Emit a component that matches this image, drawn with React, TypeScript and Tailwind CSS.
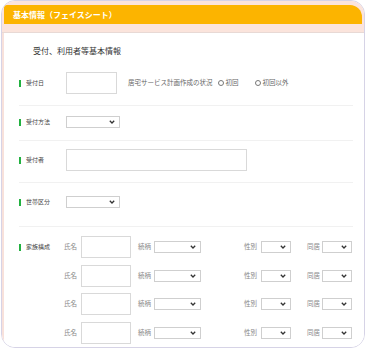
import React from "react";

const font = { fontFamily: '"Noto Sans CJK JP", "Noto Sans", sans-serif' };

const Chevron = () => (
  <svg width="6" height="4" viewBox="0 0 6 4" className="shrink-0">
    <path d="M0.8 0.8 L3 3 L5.2 0.8" fill="none" stroke="#333" strokeWidth="1.3" />
  </svg>
);

const Select = ({ w }: { w: string }) => (
  <div className={`${w} h-[12px] border border-[#cfcfcf] bg-white flex items-center justify-end pr-[4px]`}>
    <Chevron />
  </div>
);

const Label = ({ text }: { text: string }) => (
  <div className="w-[47px] shrink-0 flex items-center gap-[5px]">
    <span className="w-[2px] h-[7px] bg-[#22b140]" />
    <span className="text-[6px] leading-[8px] text-[#444]">{text}</span>
  </div>
);

const Radio = ({ text }: { text: string }) => (
  <span className="flex items-center gap-[2px]">
    <span className="w-[6px] h-[6px] rounded-full border border-[#777] bg-white" />
    <span>{text}</span>
  </span>
);

const FamilyRow = () => (
  <div className="flex items-center h-[22px] text-[6.5px] text-[#888]">
    <span className="w-[17px]">氏名</span>
    <div className="w-[50px] h-[22px] border border-[#d9d9d9] bg-white" />
    <span className="ml-[7px] w-[16px]">続柄</span>
    <Select w="w-[47px]" />
    <span className="ml-[43px] w-[17px]">性別</span>
    <Select w="w-[30px]" />
    <span className="ml-[16px] w-[15px]">同居</span>
    <Select w="w-[30px]" />
  </div>
);

export default function App() {
  return (
    <div className="w-[367px] h-[349px] bg-white overflow-hidden" style={font}>
      <div className="ml-[1px] w-[364px] h-[348px] border border-[#d6d3e6] rounded-[14px] overflow-hidden bg-white">
        <div className="bg-[#fbe4dc] px-[2px] pt-[4px]">
          <div className="h-[19px] bg-[#fcb400] rounded-tr-[12px] rounded-tl-[3px] flex items-center pl-[9px]">
            <span className="text-white font-bold text-[8px] leading-[10px]">基本情報（フェイスシート）</span>
          </div>
        </div>
        <div className="h-[9px] bg-[#fbe4dc] border-b border-[#e8d9d5]" />
        <div className="border-l-[2px] border-l-[#f8e1db] pl-[15px] pr-[11px] pb-[10px] bg-white">
          <div className="pt-[12px] pl-[14px] text-[8px] leading-[12px] text-[#333]">受付、利用者等基本情報</div>

          <div className="flex items-center pt-[15px] pb-[11px] border-b border-[#f1f1f1]">
            <Label text="受付日" />
            <div className="w-[51px] h-[22px] border border-[#d9d9d9] bg-white" />
            <div className="ml-[11px] flex items-center gap-[5px] text-[6.5px] text-[#666]">
              <span>居宅サービス計画作成の状況</span>
              <Radio text="初回" />
              <span className="ml-[11px]"><Radio text="初回以外" /></span>
            </div>
          </div>

          <div className="flex items-center pt-[10px] pb-[12px] border-b border-[#f1f1f1]">
            <Label text="受付方法" />
            <Select w="w-[54px]" />
          </div>

          <div className="flex items-center pt-[8px] pb-[11px] border-b border-[#f1f1f1]">
            <Label text="受付者" />
            <div className="w-[181px] h-[22px] border border-[#d9d9d9] bg-white" />
          </div>

          <div className="flex items-center pt-[13px] pb-[18px] border-b border-[#f1f1f1]">
            <Label text="世帯区分" />
            <Select w="w-[54px]" />
          </div>

          <div className="flex items-start pt-[9px]">
            <div className="h-[22px] flex items-center"><Label text="家族構成" /></div>
            <div className="-ml-[2px] flex flex-col gap-[6.5px]">
              <FamilyRow />
              <FamilyRow />
              <FamilyRow />
              <FamilyRow />
            </div>
          </div>
        </div>
      </div>
    </div>
  );
}
